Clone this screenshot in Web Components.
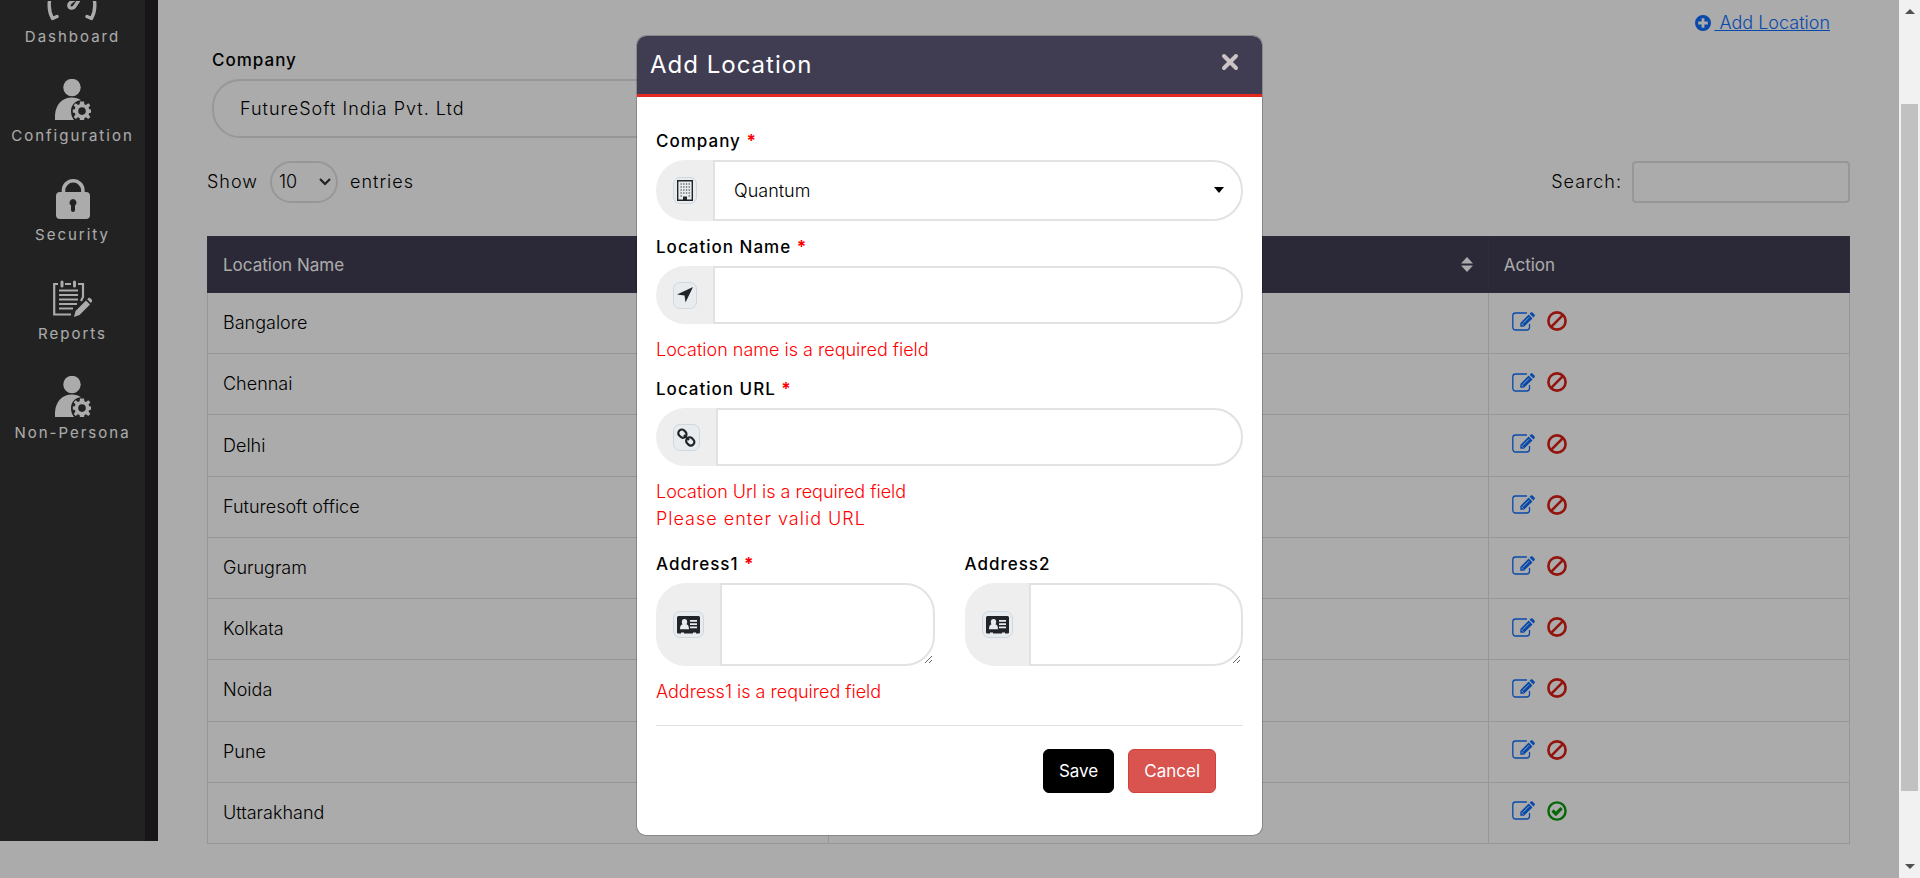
<!DOCTYPE html>
<html lang="en">
<head>
<meta charset="utf-8">
<title>Locations</title>
<style>
html, body { margin: 0; height: 100%; overflow: hidden; background: #fff; }
body { font: 300 18px/24px Inter, sans-serif; color: #000; }
</style>
</head>
<body>
<app-shell>
  <side-nav slot="nav">
    <nav-item icon="gauge">Dashboard</nav-item>
    <nav-item icon="user">Configuration</nav-item>
    <nav-item icon="lock">Security</nav-item>
    <nav-item icon="report">Reports</nav-item>
    <nav-item icon="user">Non-Persona</nav-item>
  </side-nav>
  <location-page></location-page>
  <location-dialog slot="dialog"></location-dialog>
  <scroll-rail slot="rail"></scroll-rail>
</app-shell>
<script>
const icons = {
  gauge: '<svg width="52" height="20" viewBox="0 0 52 20"><g fill="none" stroke="currentColor" stroke-width="3.4" stroke-linecap="round" stroke-linejoin="round"><path d="M10 15.500l-4.500 2C2 11 1.500 4 3-3M40 15.500l4.500 2C48 11 48.500 4 47-3"/><path d="M34-4L28 5c-1.500 3-7 3-6 -1.500C23 1 26 0 28-2"/></g></svg>',
  user: '<svg width="36" height="41" viewBox="0 0 36 41"><g fill="currentColor"><circle cx="17" cy="8.500" r="8.700"/><path d="M0 41V36C1 25 7 18.500 17 18.500c3.500 0 6.500 1 9 2.800-6 .5-10 5-10 10.700 0 3.500 1 6.500 3 9z"/><path fill-rule="evenodd" d="M25 22.500h4l.4 2.800 1.600.7 2.300-1.700 2 2-1.700 2.300.6 1.600 2.800.4v3l-2.800.4-.6 1.600 1.700 2.300-2 2-2.300-1.700-1.600.7-.4 2.800h-4l-.4-2.800-1.600-.7-2.300 1.700-2-2 1.700-2.300-.6-1.600-2-.4v-3l2-.4.6-1.600-1.700-2.300 2-2 2.300 1.700 1.600-.7zM27 28.300a3.800 3.800 0 1 0 0 7.600 3.800 3.800 0 0 0 0-7.600z"/></g></svg>',
  lock: '<svg width="34" height="40" viewBox="0 0 34 40"><path fill="none" stroke="currentColor" stroke-width="3.600" d="M7.500 14v-2.500a9.700 9.700 0 0 1 19.400 0V14"/><path fill="currentColor" fill-rule="evenodd" d="M4 13h26a4 4 0 0 1 4 4v19a4 4 0 0 1-4 4H4a4 4 0 0 1-4-4V17a4 4 0 0 1 4-4zm13 7a3.600 3.600 0 0 0-2 6.500V31a2 2 0 0 0 4 0v-4.500a3.600 3.600 0 0 0-2-6.500z"/></svg>',
  report: '<svg width="40" height="38" viewBox="0 0 40 38"><g fill="none" stroke="currentColor"><path stroke-width="2.200" d="M18 34.500H1.200V4H5M12 4h6M25 4h5v13l-2 4"/><path stroke-width="3" stroke-linecap="round" d="M9 2v4M21.500 2v4"/><path stroke-width="1.900" d="M6 10.500h19M6 15h19M6 19.500h19M6 24h18M6 28.500h14"/></g><path fill="currentColor" d="M21 37l1.500-6L33 20.500l4 4L26.500 35zM34.200 19.300l1.300-1.300c1-1 4.500 2 3.500 3.500l-1.200 1.500z"/></svg>',
  plus: '<svg width="16" height="16" viewBox="0 0 16 16"><path fill="currentColor" fill-rule="evenodd" d="M8 0a8 8 0 1 1 0 16A8 8 0 0 1 8 0zM6.600 3.200v3.400H3.200v2.800h3.400v3.400h2.800V9.400h3.400V6.600H9.400V3.200z"/></svg>',
  edit: '<svg width="23" height="19" viewBox="0 0 23 19"><path fill="none" stroke="currentColor" stroke-width="1.300" stroke-linecap="round" d="M14.500 1H3.500A2.700 2.700 0 0 0 .8 3.700v11.500A2.700 2.700 0 0 0 3.500 18h11.300a2.700 2.700 0 0 0 2.700-2.700v-3"/><path fill="currentColor" d="M8.300 14.800V11L16.700 2.600l3.800 3.800L12 14.800zM17.600 1.700L18.800.5c.5-.5 1.200-.5 1.700 0l2 2c.5.500.5 1.200 0 1.700l-1.100 1.200z"/><path stroke="#fff" stroke-width=".9" d="M10.800 11.500L17 5.300M9.500 11.800l1.800 1.800"/></svg>',
  ban: '<svg width="20" height="20" viewBox="0 0 20 20"><g fill="none" stroke="currentColor" stroke-width="2.600"><circle cx="10" cy="10" r="8.600"/><path d="M4.200 15.800L15.800 4.200"/></g></svg>',
  check: '<svg width="20" height="20" viewBox="0 0 20 20"><g fill="none" stroke="currentColor"><circle cx="10" cy="10" r="8.600" stroke-width="2.400"/><path stroke-width="3.200" d="M5.500 9.500l3.400 3.400 5.700-5.700"/></g></svg>',
  sort: '<svg width="12" height="15" viewBox="0 0 12 15"><path fill="currentColor" d="M0 6.500L6 0l6 6.500zM0 8.500h12L6 15z"/></svg>',
  building: '<svg width="16" height="21" viewBox="0 0 16 21"><path fill="none" stroke="currentColor" stroke-width="1.400" d="M.7.7h14.600v19.600H.7z"/><path stroke="currentColor" stroke-width="1.200" stroke-dasharray="1.300 1.400" d="M3.500 4h9.500M3.500 7h9.500M3.500 10h9.500M3.500 13h9.500M3.500 16h2M11.600 16h1.400"/><path fill="currentColor" d="M6 16.500h4V20H6z"/></svg>',
  arrow: '<svg width="16" height="16" viewBox="0 0 16 16"><path fill="currentColor" d="M16 0L8.500 15.500 7.500 8.500 0 7.500z"/></svg>',
  link: '<svg width="19" height="19" viewBox="0 0 19 19"><g fill="none" stroke="currentColor" stroke-width="2.200"><rect x="1.800" y="1.300" width="7" height="8.500" rx="3.300" transform="rotate(-45 5.500 5.500)"/><rect x="9.800" y="9.200" width="7" height="8.500" rx="3.300" transform="rotate(-45 13.300 13.500)"/><path d="M7 7l5 5"/></g></svg>',
  card: '<svg width="23" height="18" viewBox="0 0 23 18"><path fill="currentColor" fill-rule="evenodd" d="M1.500 0h20A1.500 1.500 0 0 1 23 1.500v15a1 1 0 0 1-1 1h-3v-1h-3v1H7v-1H4v1H1a1 1 0 0 1-1-1v-15A1.500 1.500 0 0 1 1.500 0z"/><g fill="#e9ecef"><ellipse cx="7.500" cy="6" rx="2.700" ry="3.100"/><path d="M3 13.200c0-3 .8-4.700 2.700-5h3.600c1.900.3 2.700 2 2.700 5zM13 4h7v1.700h-7zM13 7.300h7V9h-7zM13 10.600h7v1.700h-7z"/></g></svg>',
  close: '<svg width="18" height="18" viewBox="0 0 18 18"><path fill="none" stroke="currentColor" stroke-width="4" stroke-linecap="round" d="M3 3l12 12M15 3L3 15"/></svg>'
};
const base = '*{box-sizing:border-box} svg{display:block} input,select,textarea,button{font:inherit;color:inherit;margin:0} ';
function define(name, render) {
  customElements.define(name, class extends HTMLElement {
    connectedCallback() {
      if (this.shadowRoot) return;
      const t = document.createElement('template');
      t.innerHTML = render(this);
      this.attachShadow({ mode: 'open' }).append(t.content.cloneNode(true));
    }
  });
}

define('app-icon', el => `<style>:host{display:inline-block;flex:none}svg{display:block}</style>${icons[el.getAttribute('name')]}`);

define('nav-item', el => `<style>${base}
  :host{display:block}
  a{display:flex;flex-direction:column;align-items:center;gap:7px;color:#fff;text-decoration:none;font-size:15px;font-weight:400;line-height:18px;letter-spacing:2px}
  .pic{display:flex;align-items:flex-end;min-height:41px}
  :host([icon=gauge]) .pic{min-height:0}
</style><a href="#"><span class="pic"><app-icon name="${el.getAttribute('icon')}"></app-icon></span><span><slot></slot></span></a>`);

define('side-nav', () => `<style>${base}
  :host{display:block;background:#333;border-right:13px solid #232025;min-height:calc(100vh - 37px)}
  nav{display:flex;flex-direction:column;gap:33px;padding-top:1px}
</style><nav><slot></slot></nav>`);

define('scroll-rail', () => `<style>${base}
  :host{display:flex;flex-direction:column;align-items:center;justify-content:space-between;background:#f1f1f1;padding:9px 0;color:#505050}
  .track{flex:1;width:17px;padding:90px 0 73px;display:flex}
  .thumb{flex:1;background:#c1c1c1}
</style><svg width="10" height="5"><path fill="currentColor" d="M0 5l5-5 5 5z"/></svg><div class="track"><div class="thumb"></div></div><svg width="10" height="5"><path fill="currentColor" d="M0 0l5 5 5-5z"/></svg>`);

define('app-shell', () => `<style>${base}
  :host{display:grid;grid-template-columns:1fr 21px;height:100vh;overflow:hidden}
  .view{position:relative;display:grid;grid-template-columns:158px 1fr;align-items:start;overflow:hidden;min-width:0}
  .backdrop{position:absolute;inset:0;background:rgba(0,0,0,.33);display:flex;justify-content:center;align-items:flex-start;padding-top:35px}
</style><div class="view"><slot name="nav"></slot><slot></slot><div class="backdrop"><slot name="dialog"></slot></div></div><slot name="rail"></slot>`);

const rows = ['Bangalore', 'Chennai', 'Delhi', 'Futuresoft office', 'Gurugram', 'Kolkata', 'Noida', 'Pune', 'Uttarakhand'];
define('location-page', () => `<style>${base}
  :host{display:block;padding:11px 49px 0}
  .top{display:flex;justify-content:flex-end;padding-right:20px}
  .add{display:flex;align-items:center;gap:3px;color:#0d6efd;text-decoration:none}
  .add span{text-decoration:underline;white-space:pre}
  .company{display:flex;flex-direction:column;width:50%;padding-left:5px;margin-top:13px;gap:7px}
  .company label{font-size:17px;font-weight:500;letter-spacing:1px}
  .company select{appearance:none;background:#fff;border:2px solid #e2e2e2;border-radius:28px;height:59px;padding:0 26px;letter-spacing:1px}
  .tools{display:flex;justify-content:space-between;margin-top:23px;height:42px;align-items:center}
  .tools label{letter-spacing:1px;display:flex;align-items:center}
  .len{position:relative;margin:0 12px;display:flex;align-items:center}
  .len select{appearance:none;width:68px;height:42px;border:2px solid #e2e2e2;border-radius:21px;background:#fff;padding:0 7px}
  .len svg{position:absolute;right:7px;pointer-events:none}
  .search input{width:218px;height:42px;border:2px solid #e2e2e2;border-radius:4px;margin-left:10px;background:#fff}
  table{width:100%;height:608px;table-layout:fixed;border-collapse:collapse;margin-top:33px}
  th{background:#403d52;color:#fff;font-size:17px;font-weight:400;text-align:left;height:56px}
  th,td{padding:0 15px;border:1px solid #e2e2e2}
  th{border-color:#454257}
  th:nth-child(1){width:37.8%} th:nth-child(2){width:40.2%}
  .h{display:flex;justify-content:flex-end}
  .acts{display:flex;gap:12px;padding:2px 8px 0;align-items:center}
  .acts button{border:0;background:none;padding:0;display:block}
  .edit{color:#0d6efd}.off{color:#dc1e14}.on{color:#0a9a0a}
</style>
<div class="top"><a class="add" href="#"><app-icon name="plus"></app-icon><span> Add Location</span></a></div>
<div class="company"><label for="co">Company</label><select id="co"><option>FutureSoft India Pvt. Ltd</option></select></div>
<div class="tools"><label for="len">Show<span class="len"><select id="len"><option>10</option></select><svg width="12" height="8" viewBox="0 0 12 8"><path fill="none" stroke="#333" stroke-width="2.200" d="M1 1l5 5 5-5"/></svg></span>entries</label>
<label class="search">Search:<input type="search"></label></div>
<table><thead><tr><th>Location Name</th><th><div class="h"><app-icon name="sort"></app-icon></div></th><th>Action</th></tr></thead><tbody>
${rows.map((r, i) => `<tr><td>${r}</td><td></td><td><div class="acts"><button class="edit" aria-label="Edit"><app-icon name="edit"></app-icon></button>${i === 8 ? '<button class="on" aria-label="Active"><app-icon name="check"></app-icon></button>' : '<button class="off" aria-label="Inactive"><app-icon name="ban"></app-icon></button>'}</div></td></tr>`).join('')}
</tbody></table>`);

define('form-field', el => {
  const kind = el.getAttribute('kind') || 'input';
  const control = {
    input: '<input id="c" type="text">',
    textarea: '<textarea id="c"></textarea>',
    select: '<select id="c"><option>Quantum</option></select><svg class="caret" width="10" height="6"><path d="M0 0h10L5 6z"/></svg>'
  }[kind];
  return `<style>${base}
  :host{display:block;min-width:0}
  label{display:block;font-size:17px;font-weight:500;letter-spacing:1px;margin-bottom:7px}
  label span{color:red;font-weight:700}
  .group{position:relative;display:flex;height:58px;border-radius:30px}
  .group.select{height:61px}.group.textarea{height:83px}
  .addon{display:flex;align-items:center;padding:0 16px 0 17px;background:#eee;border-radius:30px 0 0 30px}
  .badge{display:grid;place-items:center;height:27px;padding:0 3px;border:1px solid #ced8e0;border-radius:7px;background:#e9ecef;color:#212529}
  input,select,textarea{appearance:none;flex:1;min-width:0;border:2px solid #e2e2e2;border-radius:0 30px 30px 0;background:#fff;padding:0 19px;outline:0}
  .caret{position:absolute;right:19px;top:27px;pointer-events:none}
</style><label for="c">${el.getAttribute('label')}${el.hasAttribute('required') ? ' <span>*</span>' : ''}</label>
<div class="group ${kind}"><span class="addon"><span class="badge"><app-icon name="${el.getAttribute('icon')}"></app-icon></span></span>${control}</div><slot></slot>`;
});

define('field-error', el => `<style>:host{display:block;color:#f00;line-height:27px}:host([spaced]){letter-spacing:1px}:host([first]){padding-top:12px}</style><slot></slot>`);

define('location-dialog', () => `<style>${base}
  :host{display:block;width:625px;background:#fff;border:1px solid rgba(0,0,0,.2);background-clip:padding-box;border-radius:10px;overflow:hidden}
  header{display:flex;justify-content:space-between;align-items:center;background:#403d52;color:#fff;height:61px;padding:0 23px 0 13px;border-bottom:3px solid #e62822}
  h2{margin:0;font-size:24px;line-height:32px;font-weight:400;letter-spacing:1px}
  header button{border:0;background:none;padding:0;color:#ccc4c4}
  form{padding:32px 19px 42px}
  form-field{margin-bottom:14px}
  .pair{display:grid;grid-template-columns:1fr 1fr;gap:30px;margin-top:20px}
  .pair form-field{margin:0}
  hr{border:0;border-top:1px solid #dee2e6;margin:20px 0 23px}
  footer{display:flex;justify-content:flex-end;gap:14px;padding-right:27px}
  footer button{height:44px;padding:0 15px;border-radius:6px;border:1px solid #000;background:#000;color:#fff;font-size:17px;font-weight:400}
  footer .cancel{background:#d9534f;border-color:#d43f3a}
</style>
<header><h2>Add Location</h2><button aria-label="Close"><app-icon name="close"></app-icon></button></header>
<form>
<form-field label="Company" required kind="select" icon="building"></form-field>
<form-field label="Location Name" required icon="arrow"><field-error first>Location name is a required field</field-error></form-field>
<form-field label="Location URL" required icon="link"><field-error first>Location Url is a required field</field-error><field-error spaced>Please enter valid URL</field-error></form-field>
<div class="pair"><form-field label="Address1" required kind="textarea" icon="card"><field-error first>Address1 is a required field</field-error></form-field><form-field label="Address2" kind="textarea" icon="card"></form-field></div>
<hr>
<footer><button type="button">Save</button><button type="button" class="cancel">Cancel</button></footer>
</form>`);
</script>
</body>
</html>
